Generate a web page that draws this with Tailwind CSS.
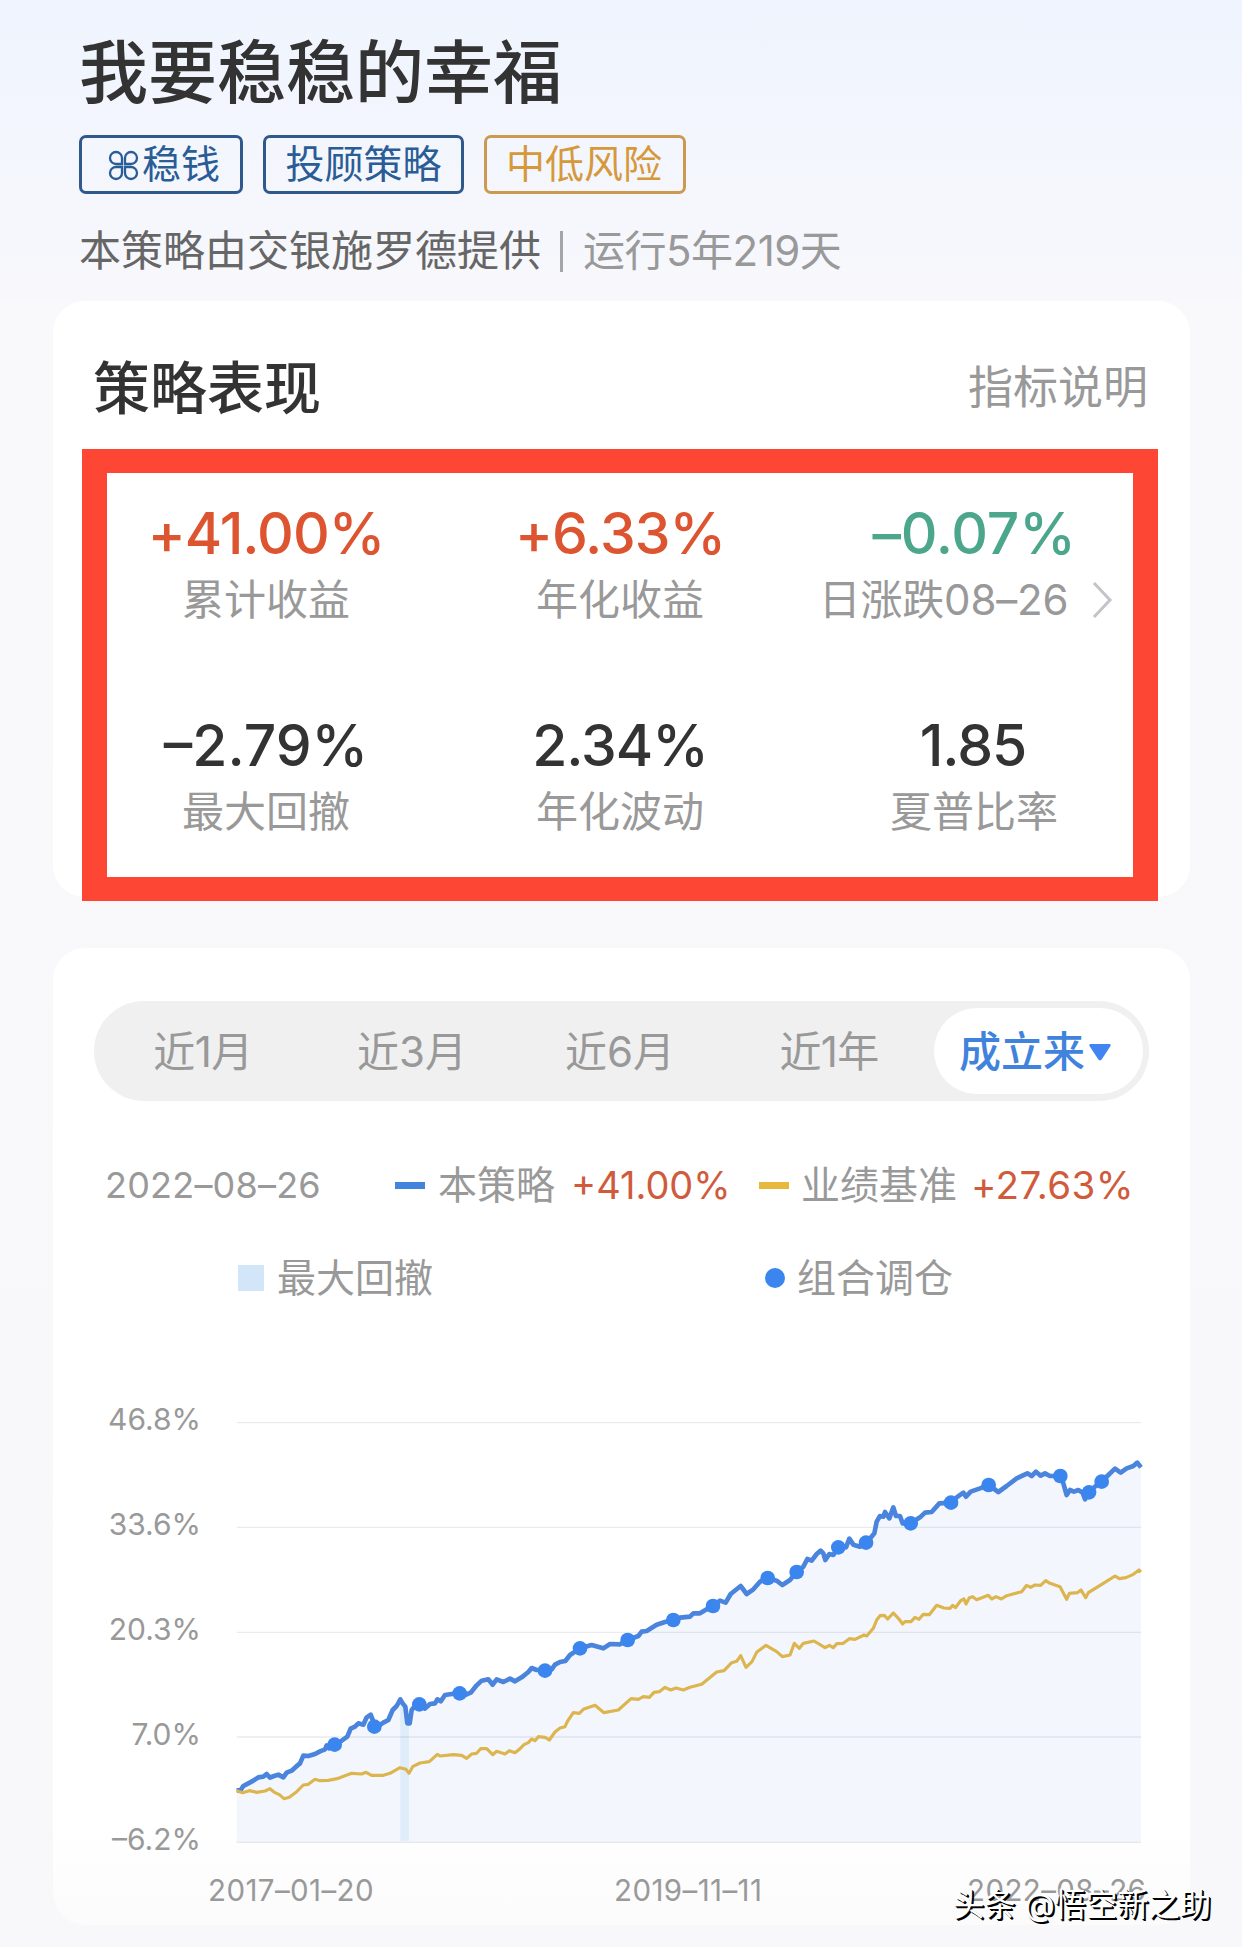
<!DOCTYPE html>
<html lang="zh-CN">
<head>
<meta charset="utf-8">
<title>我要稳稳的幸福</title>
<script src="https://cdn.jsdelivr.net/npm/@tailwindcss/browser@4"></script>
</head>
<body class="font-['Inter','Noto_Sans_CJK_SC',sans-serif] bg-[#f9f9fc]">
<div class="relative w-[1242px] h-[1947px] overflow-hidden bg-linear-to-b from-[#f9f9fc] to-[#f8f8fa]">
  <div class="h-[301px] bg-linear-to-b from-[#eff4fe] to-[#f8f8fc] pl-[79px] pt-[38px]">
    <h1 class="text-[69px] leading-[70px] font-medium text-[#333] whitespace-nowrap">我要稳稳的幸福</h1>
    <div class="mt-[27px] flex gap-5 text-[39px] leading-[51px] text-[#2a5c95]">
      <div class="w-[164px] h-[59px] border-3 border-[#30598b] rounded-[7px] flex items-center pl-[26px] gap-[3px]">
        <svg class="w-[31px] h-[31px] mt-0.5 shrink-0" viewBox="0 0 31 31" fill="none" stroke="currentColor" stroke-width="2.3">
          <path d="M14 14V8A6 6 0 1 0 8 14ZM17 14V8A6 6 0 1 1 23 14ZM14 17V23A6 6 0 1 1 8 17ZM17 17V23A6 6 0 1 0 23 17Z"/>
        </svg>
        <span class="-mt-0.5">稳钱</span>
      </div>
      <div class="w-[201px] h-[59px] border-3 border-[#30598b] rounded-[7px] text-center">投顾策略</div>
      <div class="w-[202px] h-[59px] border-3 border-[#cb9a50] rounded-[7px] pl-[19px] text-[#d5993c]">中低风险</div>
    </div>
    <div class="mt-[32px] flex items-center text-[42px] leading-[50px] text-[#666] whitespace-nowrap">
      <span>本策略由交银施罗德提供</span>
      <i class="w-[3px] h-[41px] bg-[#a5a5a8] ml-[19px] mr-5"></i>
      <span class="text-[#999] tracking-[-0.5px]">运行5年219天</span>
    </div>
  </div>

  <section class="relative ml-[53px] w-[1137px] h-[596px] bg-white rounded-[32px] pt-[58px]">
    <div class="flex justify-between items-center pl-[40px] pr-[42px]">
      <h2 class="text-[57px] leading-[60px] font-medium text-[#333]">策略表现</h2>
      <span class="-mt-0.5 text-[45px] leading-[60px] text-[#999]">指标说明</span>
    </div>
    <div class="mt-[83px] ml-[36px] w-[1062px] grid grid-cols-3 gap-y-[89px] text-center text-[42px] leading-[50px] text-[#999]">
      <div><div class="text-[57px] leading-[64px] mb-[9px] font-medium text-[#dd5430] tracking-[-1px]">+41.00%</div>累计收益</div>
      <div><div class="text-[57px] leading-[64px] mb-[9px] font-medium text-[#dd5430] tracking-[-1px]">+6.33%</div>年化收益</div>
      <div><div class="text-[57px] leading-[64px] mb-[9px] font-medium text-[#4ca68c] tracking-[-0.2px]">–0.07%</div>
        <div class="flex items-center justify-center pr-[16px]"><span class="tracking-[-0.2px]">日涨跌08–26</span>
          <svg class="w-[21px] h-[38px] ml-6" viewBox="0 0 21 38" fill="none" stroke="#c4c4c8" stroke-width="3"><path d="M2 2L18 19L2 36"/></svg>
        </div>
      </div>
      <div><div class="text-[57px] leading-[64px] mb-[9px] font-medium text-[#333]">–2.79%</div>最大回撤</div>
      <div><div class="text-[57px] leading-[64px] mb-[9px] font-medium text-[#333] tracking-[-1px]">2.34%</div>年化波动</div>
      <div><div class="text-[57px] leading-[64px] mb-[9px] font-medium text-[#333] tracking-[-1px] pr-0.5">1.85</div>夏普比率</div>
    </div>
    <div class="absolute left-[29px] top-[148px] w-[1076px] h-[452px] border-x-25 border-y-24 border-[#fe4635]"></div>
  </section>

  <section class="mt-[51px] ml-[53px] w-[1137px] h-[977px] bg-linear-to-b from-white from-90% to-[#fbfbfc] rounded-[32px] pt-[53px]">
    <div class="ml-[41px] w-[1055px] h-[100px] rounded-full bg-[#f0f0f0] flex items-center pr-[6px] text-[42px] leading-[50px] text-[#999]">
      <div class="w-[218px] pt-0.5 text-center tracking-[-0.5px]">近1月</div>
      <div class="w-[200px] pt-0.5 text-center">近3月</div>
      <div class="w-[216px] pt-0.5 text-center">近6月</div>
      <div class="w-[206px] pt-0.5 pr-1 text-center tracking-[-0.7px]">近1年</div>
      <div class="w-[209px] h-[86px] rounded-full bg-white flex items-center pt-0.5 pl-[25px] font-medium text-[#3f83dc]">成立来
        <svg class="w-[22px] h-[17px] ml-[4px]" viewBox="0 0 22 18" preserveAspectRatio="none" fill="#4385f0"><path d="M2 0H20Q23 0 21 3L13 16Q11 19 9 16L1 3Q-1 0 2 0Z"/></svg>
      </div>
    </div>
    <div class="mt-[59px] ml-[52px] flex items-center h-[50px] text-[39px] leading-[50px] text-[#999] whitespace-nowrap">
      <span class="w-[290px] text-[36px] tracking-[0.2px]">2022–08–26</span>
      <i class="w-[30px] h-[7px] bg-[#4384dd]"></i>
      <span class="ml-[13px] w-[133px]">本策略</span>
      <span class="w-[188px] text-[38px] text-[#cf5b3c]">+41.00%</span>
      <i class="w-[30px] h-[7px] bg-[#e8b83c]"></i>
      <span class="ml-[12px] w-[170px]">业绩基准</span>
      <span class="text-[38.5px] tracking-[0.4px] text-[#cf5b3c]">+27.63%</span>
    </div>
    <div class="mt-[43px] ml-[185px] flex items-center h-[50px] text-[39px] leading-[50px] text-[#999] whitespace-nowrap">
      <i class="size-[26px] bg-[#d3e5f8]"></i>
      <span class="ml-[13px] w-[488px]">最大回撤</span>
      <i class="size-5 rounded-full bg-[#3b85ee]"></i>
      <span class="ml-[12px]">组合调仓</span>
    </div>
    <div class="mt-[100px] flex">
      <div class="w-[148px] -mt-[4px] flex flex-col gap-[65px] text-right text-[30px] leading-10 text-[#999]">
        <span>46.8%</span><span>33.6%</span><span>20.3%</span><span>7.0%</span><span>–6.2%</span>
      </div>
      <svg class="w-[940px] h-[450px] ml-[19px] mt-[7px] shrink-0" viewBox="0 -510 2820 1350" fill="none" stroke-linejoin="round">
        <path id="area" fill="#f3f6fd"/>
        <path d="M541 370L556 380L562 430H567V782H541Z" fill="#dfecf9"/>
        <path d="M50 -472H2763M50 -158H2763M50 157H2763M50 471H2763M50 787H2763" stroke="#5a6478" stroke-opacity=".13" stroke-width="4"/>
        <polyline id="fund" stroke="#4a84dc" stroke-width="14" points="50,632 62,630 70,618 85,610 100,602 115,592 130,590 140,582 150,593 162,588 175,584 190,592 200,578 215,572 228,560 240,550 250,527 265,528 285,522 300,514 315,508 320,496 328,505 344,494 365,482 382,470 392,446 405,440 415,430 430,434 440,412 452,404 462,430 475,438 490,428 505,420 518,390 530,378 541,358 548,370 556,380 562,430 569,430 575,390 585,378 598,373 615,386 630,372 645,370 652,358 662,364 675,345 695,342 720,340 735,345 752,338 770,316 785,302 805,298 818,314 830,298 850,306 870,296 885,304 905,292 925,276 935,264 950,270 975,270 995,268 1005,254 1020,246 1036,243 1050,225 1080,205 1115,195 1150,205 1170,192 1200,193 1223,180 1255,168 1265,155 1280,153 1310,134 1335,126 1360,120 1380,113 1410,110 1420,100 1440,100 1460,88 1479,78 1500,62 1517,68 1532,42 1562,18 1580,42 1600,28 1620,5 1643,-6 1670,2 1687,15 1710,0 1730,-24 1750,-40 1762,-63 1775,-58 1790,-78 1802,-88 1810,-80 1816,-60 1828,-78 1840,-75 1855,-98 1878,-98 1888,-124 1900,-106 1920,-100 1940,-112 1963,-140 1970,-175 1980,-192 1990,-190 1995,-204 2008,-185 2020,-218 2028,-192 2040,-192 2048,-170 2072,-170 2100,-188 2115,-202 2135,-204 2158,-230 2193,-232 2210,-248 2230,-262 2238,-250 2252,-265 2280,-275 2306,-285 2335,-264 2360,-282 2390,-305 2422,-320 2435,-312 2448,-325 2462,-313 2475,-320 2490,-312 2521,-312 2530,-290 2540,-255 2550,-270 2562,-265 2575,-270 2588,-262 2595,-242 2607,-263 2625,-280 2645,-295 2665,-315 2685,-334 2702,-322 2720,-335 2740,-342 2752,-352 2763,-338"/>
        <polyline stroke="#ddb54e" stroke-width="9.5" points="50,632 68,638 88,632 110,637 135,633 150,626 165,638 178,644 192,656 208,652 230,635 250,615 265,613 285,598 300,602 325,601 355,595 395,580 425,582 438,577 455,586 490,586 510,580 540,563 558,568 567,580 578,560 600,549 628,545 652,523 660,528 700,524 725,526 740,535 755,522 770,520 782,506 800,506 818,524 830,514 855,522 868,512 885,518 900,506 912,494 925,488 935,477 945,482 955,470 975,472 988,480 1005,456 1020,444 1035,440 1043,423 1060,398 1078,400 1090,388 1125,376 1152,398 1195,390 1233,356 1255,358 1270,350 1288,352 1302,337 1318,335 1335,322 1352,330 1368,324 1390,330 1410,322 1445,313 1490,276 1512,272 1535,248 1550,244 1562,227 1578,262 1596,245 1610,217 1638,196 1670,215 1687,230 1710,225 1723,190 1738,205 1750,190 1782,183 1815,203 1828,196 1840,203 1850,191 1870,190 1888,176 1905,178 1932,165 1940,168 1960,145 1970,120 1980,107 1993,106 2003,117 2020,99 2035,115 2048,132 2055,125 2073,125 2085,112 2097,118 2110,103 2128,104 2150,76 2172,84 2190,85 2198,76 2206,83 2222,62 2232,57 2238,72 2248,53 2258,50 2270,59 2305,46 2315,57 2328,50 2344,57 2360,47 2405,35 2420,16 2432,22 2445,15 2462,16 2477,2 2490,10 2520,20 2532,43 2540,58 2548,40 2572,38 2583,30 2597,53 2605,38 2650,10 2685,-12 2698,-4 2718,-7 2740,-17 2757,-30 2763,-24"/>
        <g id="dots" fill="#3b85ee"></g>
      </svg>
    </div>
    <div class="mt-[10px] ml-[155px] flex text-[29.5px] leading-10 tracking-[0.4px] text-[#999] whitespace-nowrap">
      <span class="w-[406px]">2017–01–20</span><span class="w-[353px]">2019–11–11</span><span>2022–08–26</span>
    </div>
  </section>
  <div class="absolute left-[953px] top-[1885px] text-[31.3px] leading-10 text-white whitespace-nowrap [text-shadow:1px_1px_0_#000,2px_2px_0_#000]">头条 @悟空新之助</div>
</div>
<script>
  const pts = document.getElementById('fund').getAttribute('points').split(' ');
  document.getElementById('area').setAttribute('d', 'M50,787L' + pts.join('L') + 'L2763,787Z');
  const rebalances = [[344,494],[463,440],[598,373],[719,340],[975,272],[1080,205],[1223,180],[1360,120],[1479,78],[1643,-6],[1730,-24],[1855,-98],[1938,-112],[2072,-170],[2193,-232],[2306,-285],[2521,-312],[2607,-263],[2645,-295]];
  document.getElementById('dots').innerHTML = rebalances.map(([x, y]) => `<circle cx="${x}" cy="${y}" r="22"/>`).join('');
</script>
</body>
</html>
